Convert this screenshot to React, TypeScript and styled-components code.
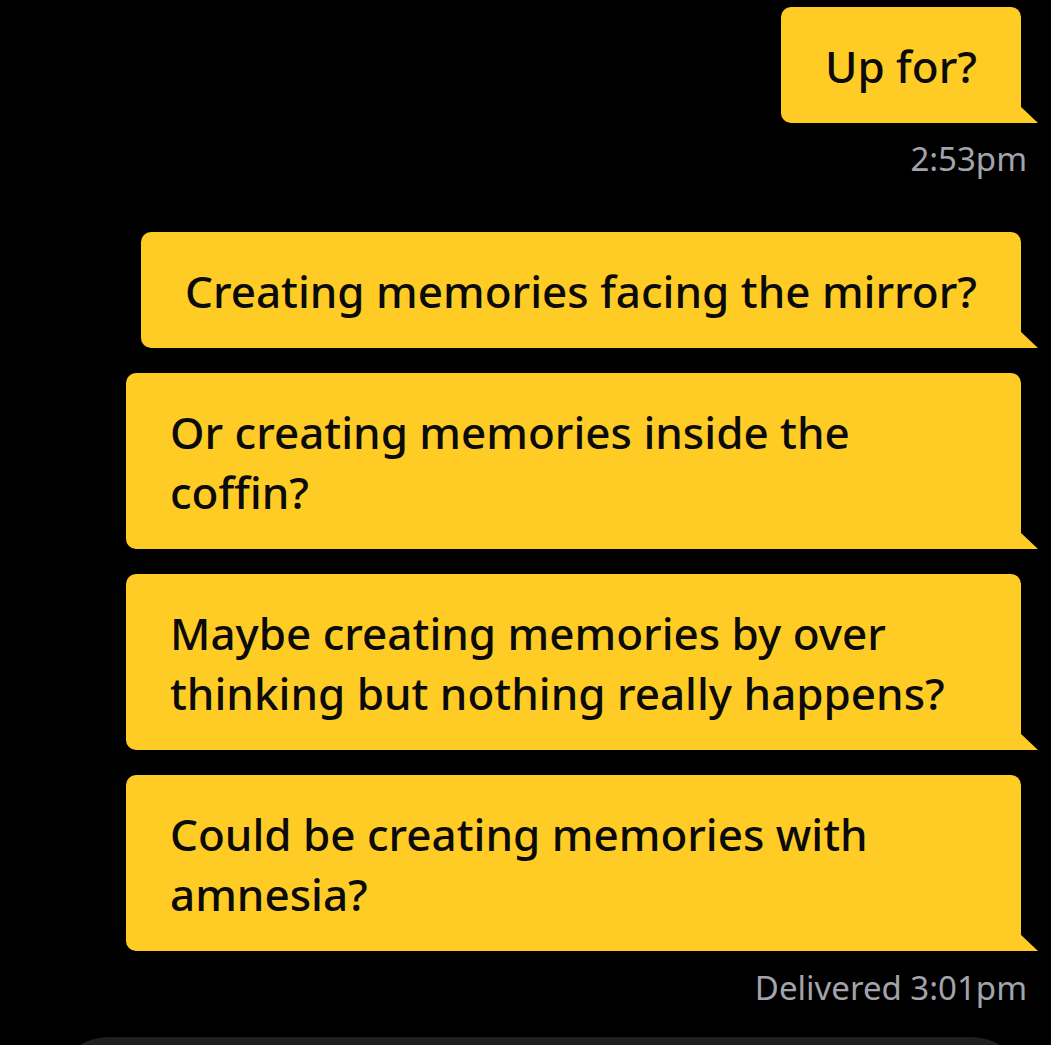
import React from "react";
import styled, { createGlobalStyle } from "styled-components";

const Global = createGlobalStyle`
  html, body {
    margin: 0;
    padding: 0;
    background: #000;
    overflow: hidden;
  }
  body {
    font-family: "Noto Sans", "Open Sans", sans-serif;
  }
`;

const Screen = styled.div`
  width: 1051px;
  height: 1045px;
  background: #000;
  overflow: hidden;
  display: flex;
  flex-direction: column;
  align-items: flex-end;
  padding: 7px 30px 0 0;
  box-sizing: border-box;
`;

const Bubble = styled.div<{ $gap?: number }>`
  position: relative;
  box-sizing: border-box;
  max-width: 895px;
  margin-top: ${(p) => p.$gap ?? 0}px;
  padding: 29px 44px 27px;
  background: #ffcb25;
  color: #0b0b0b;
  font-family: "Noto Sans", sans-serif;
  font-weight: 500;
  font-size: 44px;
  line-height: 60px;
  border-radius: 10px 10px 0 10px;
`;

const Tail = styled.span`
  position: absolute;
  right: -17px;
  bottom: 0;
  width: 18px;
  height: 17px;
  background: #ffcb25;
  clip-path: polygon(0 0, 100% 100%, 0 100%);
`;

const Meta = styled.div<{ $top: number }>`
  margin-top: ${(p) => p.$top}px;
  margin-right: -6px;
  font-family: "Noto Sans", sans-serif;
  font-weight: 400;
  font-size: 33px;
  line-height: 40px;
  color: #a3a3ab;
`;

const Composer = styled.div`
  align-self: stretch;
  margin: 29px -9px 0 50px;
  height: 120px;
  border-radius: 60px;
  background: #1f1f1f;
  flex-shrink: 0;
`;

const messages = [
  "Creating memories facing the mirror?",
  "Or creating memories inside the coffin?",
  "Maybe creating memories by over thinking but nothing really happens?",
  "Could be creating memories with amnesia?",
];

export default function App() {
  return (
    <>
      <Global />
      <Screen>
        <Bubble>
          Up for?
          <Tail />
        </Bubble>
        <Meta $top={16}>2:53pm</Meta>
        {messages.map((m, i) => (
          <Bubble key={i} $gap={i === 0 ? 53 : 25}>
            {m}
            <Tail />
          </Bubble>
        ))}
        <Meta $top={17}>Delivered 3:01pm</Meta>
        <Composer />
      </Screen>
    </>
  );
}
